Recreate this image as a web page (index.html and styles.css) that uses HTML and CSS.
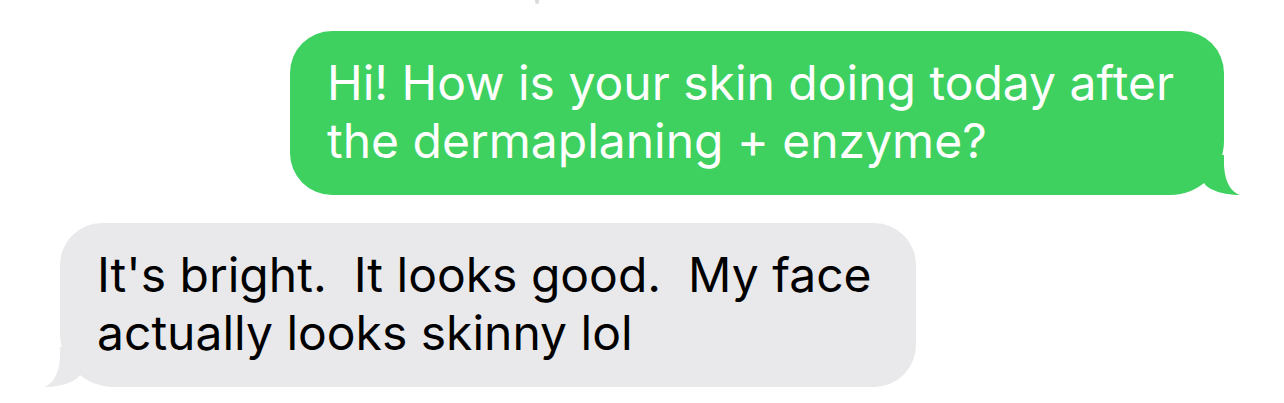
FILE: index.html
```html
<!DOCTYPE html>
<html lang="en">
<head>
  <meta charset="UTF-8">
  <meta name="viewport" content="width=device-width, initial-scale=1">
  <title>Messages</title>
  <link rel="stylesheet" href="styles.css">
</head>

<body>

<!-- cut-off timestamp above the thread -->
<div class="top-edge"><span class="mark"></span></div>

<div class="thread">

  <!-- Sent -->
  <div class="row sent">
    <div class="bubble green">
      Hi! How is your skin doing today after<br>the dermaplaning + enzyme?
      <svg class="tail" viewBox="0 0 50 40" width="50" height="40">
        <path d="M10 28 C 14 35, 30 40, 46 40 C 38 37, 31 29, 30 10 L 30 0 L 0 0 L 0 28 Z"/>
      </svg>
    </div>
  </div>

  <!-- Received -->
  <div class="row received">
    <div class="bubble gray">
      It's bright.&nbsp; It looks good.&nbsp; My face<br>actually looks skinny lol
      <svg class="tail" viewBox="0 0 50 40" width="50" height="40">
        <path d="M10 28 C 14 35, 30 40, 46 40 C 38 37, 31 29, 30 10 L 30 0 L 0 0 L 0 28 Z"/>
      </svg>
    </div>
  </div>

</div>

</body>
</html>
```

FILE: styles.css
```css
* {
  box-sizing: border-box;
  padding: 0;
  margin: 0;
}

body {
  font-family: Inter, "Liberation Sans", Arial, sans-serif;
  background: #fff;
}

.top-edge {
  height: 31px;
  padding-left: 535px;
}

.mark {
  display: block;
  width: 4px;
  height: 4px;
  border-radius: 0 0 2px 2px;
  background: #dcdcdc;
}

.thread {
  display: flex;
  flex-direction: column;
  gap: 28px;
  padding: 0 60px;
}

.row {
  display: flex;
}

.row.sent {
  justify-content: flex-end;
}

.row.received {
  justify-content: flex-start;
}

.bubble {
  position: relative;
  height: 164px;
  padding: 23px 0 0 37px;
  border-radius: 42px;
  font-size: 48px;
  line-height: 58px;
  white-space: nowrap;
}

.green {
  width: 934px;
  background: #3ed160;
  color: #fff;
  border-bottom-right-radius: 54px;
}

.gray {
  width: 856px;
  background: #e9e9eb;
  color: #000;
  border-bottom-left-radius: 54px;
}

/* tails */
.tail {
  position: absolute;
  bottom: 0;
}

.green .tail {
  right: -20px;
  fill: #3ed160;
}

.gray .tail {
  left: -20px;
  fill: #e9e9eb;
  transform: scaleX(-1);
}
```
